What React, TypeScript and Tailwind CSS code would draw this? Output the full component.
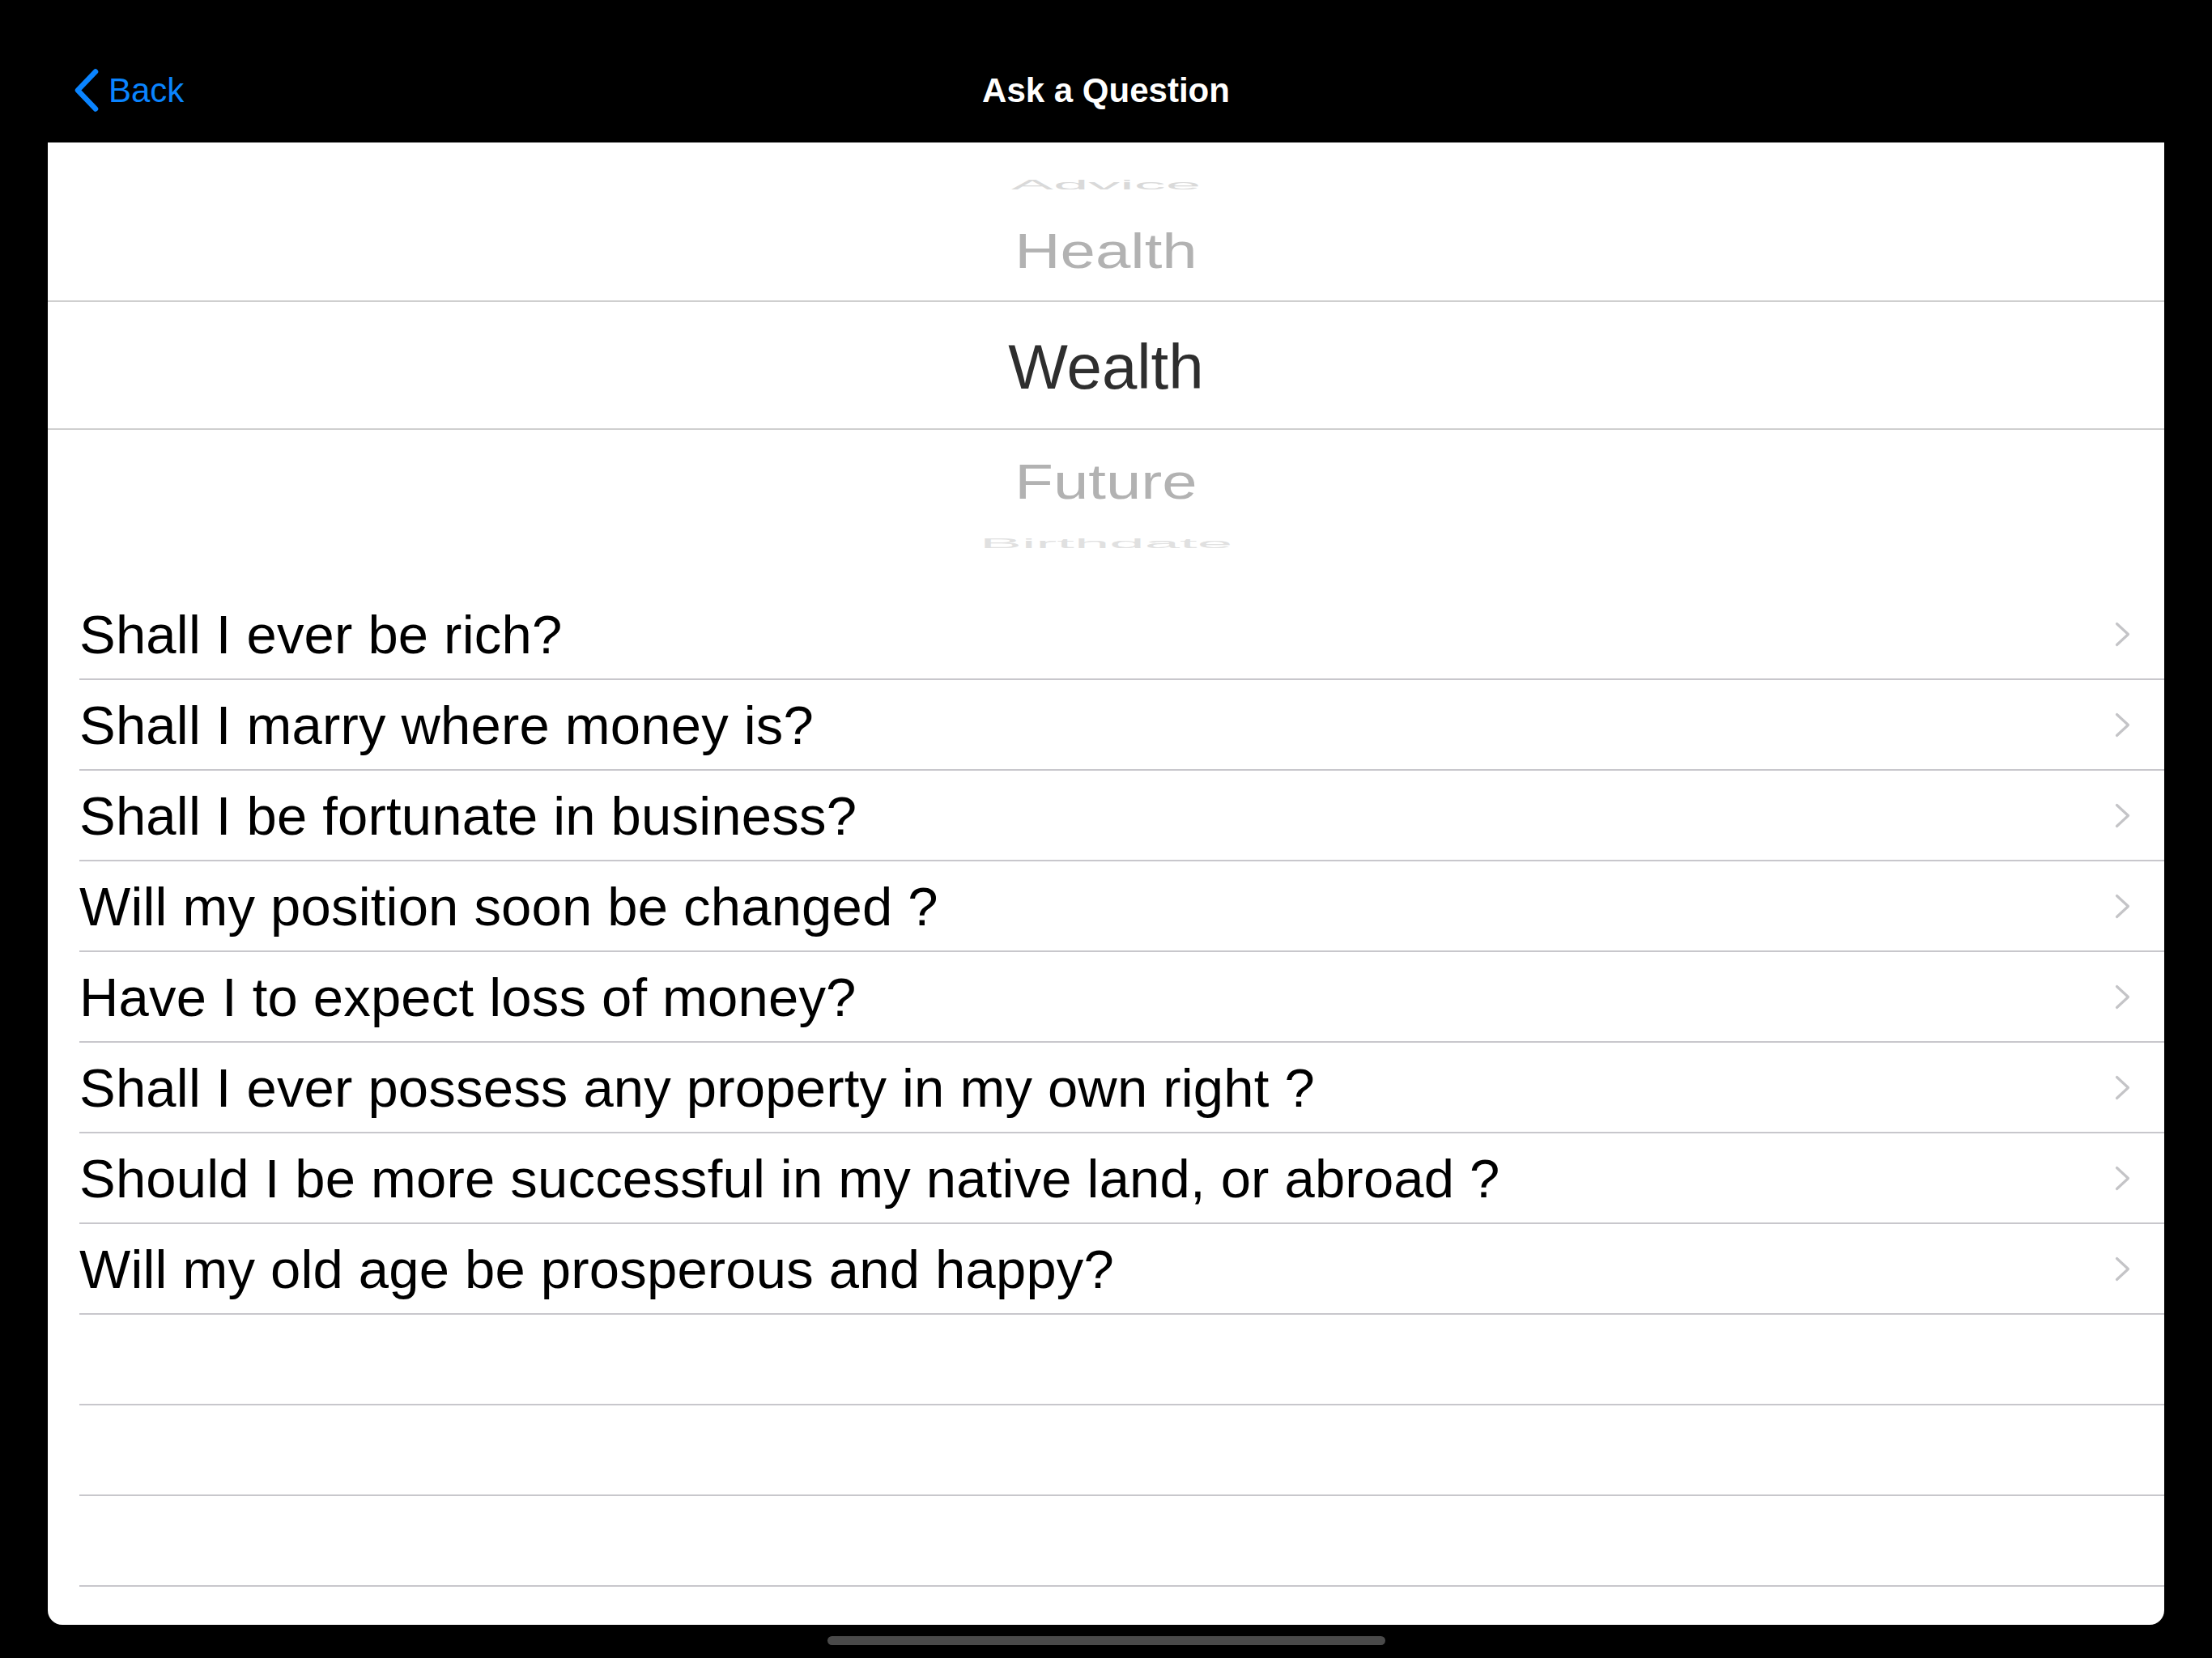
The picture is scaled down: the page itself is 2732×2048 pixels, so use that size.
const questions = [
  "Shall I ever be rich?",
  "Shall I marry where money is?",
  "Shall I be fortunate in business?",
  "Will my position soon be changed ?",
  "Have I to expect loss of money?",
  "Shall I ever possess any property in my own right ?",
  "Should I be more successful in my native land, or abroad ?",
  "Will my old age be prosperous and happy?",
]

const Chevron = () => (
  <svg width="19" height="31" viewBox="0 0 19 31" fill="none">
    <polyline points="2.5,2.5 16.5,15.5 2.5,28.5" stroke="#c4c4c7" strokeWidth="3.2" strokeLinecap="round" strokeLinejoin="round" />
  </svg>
)

const BackChevron = () => (
  <svg width="32" height="53" viewBox="0 0 32 53" fill="none">
    <polyline points="27,3.5 5,26.5 27,49.5" stroke="#0a84ff" strokeWidth="6.5" strokeLinecap="round" strokeLinejoin="round" />
  </svg>
)

const Picker = () => (
  <div className="h-[552px] flex flex-col items-stretch pt-[24px] text-[78px] leading-none select-none">
    <div className="h-[56px] flex items-center justify-center">
      <span className="text-[#d9d9d9] scale-y-[0.22]">Advice</span>
    </div>
    <div className="h-[108px] flex items-center justify-center">
      <span className="text-[#b2b2b2] scale-y-[0.78]">Health</span>
    </div>
    <div className="h-[7px]" />
    <div className="h-[160px] flex items-center justify-center border-y-2 border-[#cfcfcf]">
      <span className="text-[#2e2e2e] pt-[4px]">Wealth</span>
    </div>
    <div className="h-[128px] flex items-center justify-center">
      <span className="text-[#b2b2b2] scale-y-[0.78]">Future</span>
    </div>
    <div className="h-[24px] flex items-center justify-center">
      <span className="text-[#e0e0e0] scale-y-[0.22]">Birthdate</span>
    </div>
  </div>
)

const App = () => {
  return (
    <div className="w-[2732px] h-[2048px] bg-black flex flex-col font-['Liberation_Sans',Arial,sans-serif] overflow-hidden">
      <div className="h-[176px] shrink-0 pt-[46px] grid grid-cols-[1fr_auto_1fr] items-center">
        <div className="flex items-center pl-[91px] gap-[11px] text-[#0a84ff] text-[42px]">
          <BackChevron />
          <span>Back</span>
        </div>
        <h1 className="text-white text-[42px] font-bold">Ask a Question</h1>
        <div />
      </div>

      <div className="mx-[59px] h-[1831px] bg-white rounded-b-[18px] overflow-hidden">
        <Picker />
        <div>
          {questions.map((q) => (
            <div key={q} className="ml-[39px] h-[112px] border-b-2 border-[#c8c7cc] flex items-center justify-between pr-[42px]">
              <span className="text-black text-[67px] leading-none whitespace-nowrap tracking-[0.2px]">{q}</span>
              <Chevron />
            </div>
          ))}
          {[0, 1, 2].map((i) => (
            <div key={i} className="ml-[39px] h-[112px] border-b-2 border-[#c8c7cc]" />
          ))}
        </div>
      </div>

      <div className="flex-1 flex items-start justify-center pt-[14px]">
        <div className="w-[689px] h-[11px] rounded-full bg-[#4a4a4a]" />
      </div>
    </div>
  )
}

export default App
